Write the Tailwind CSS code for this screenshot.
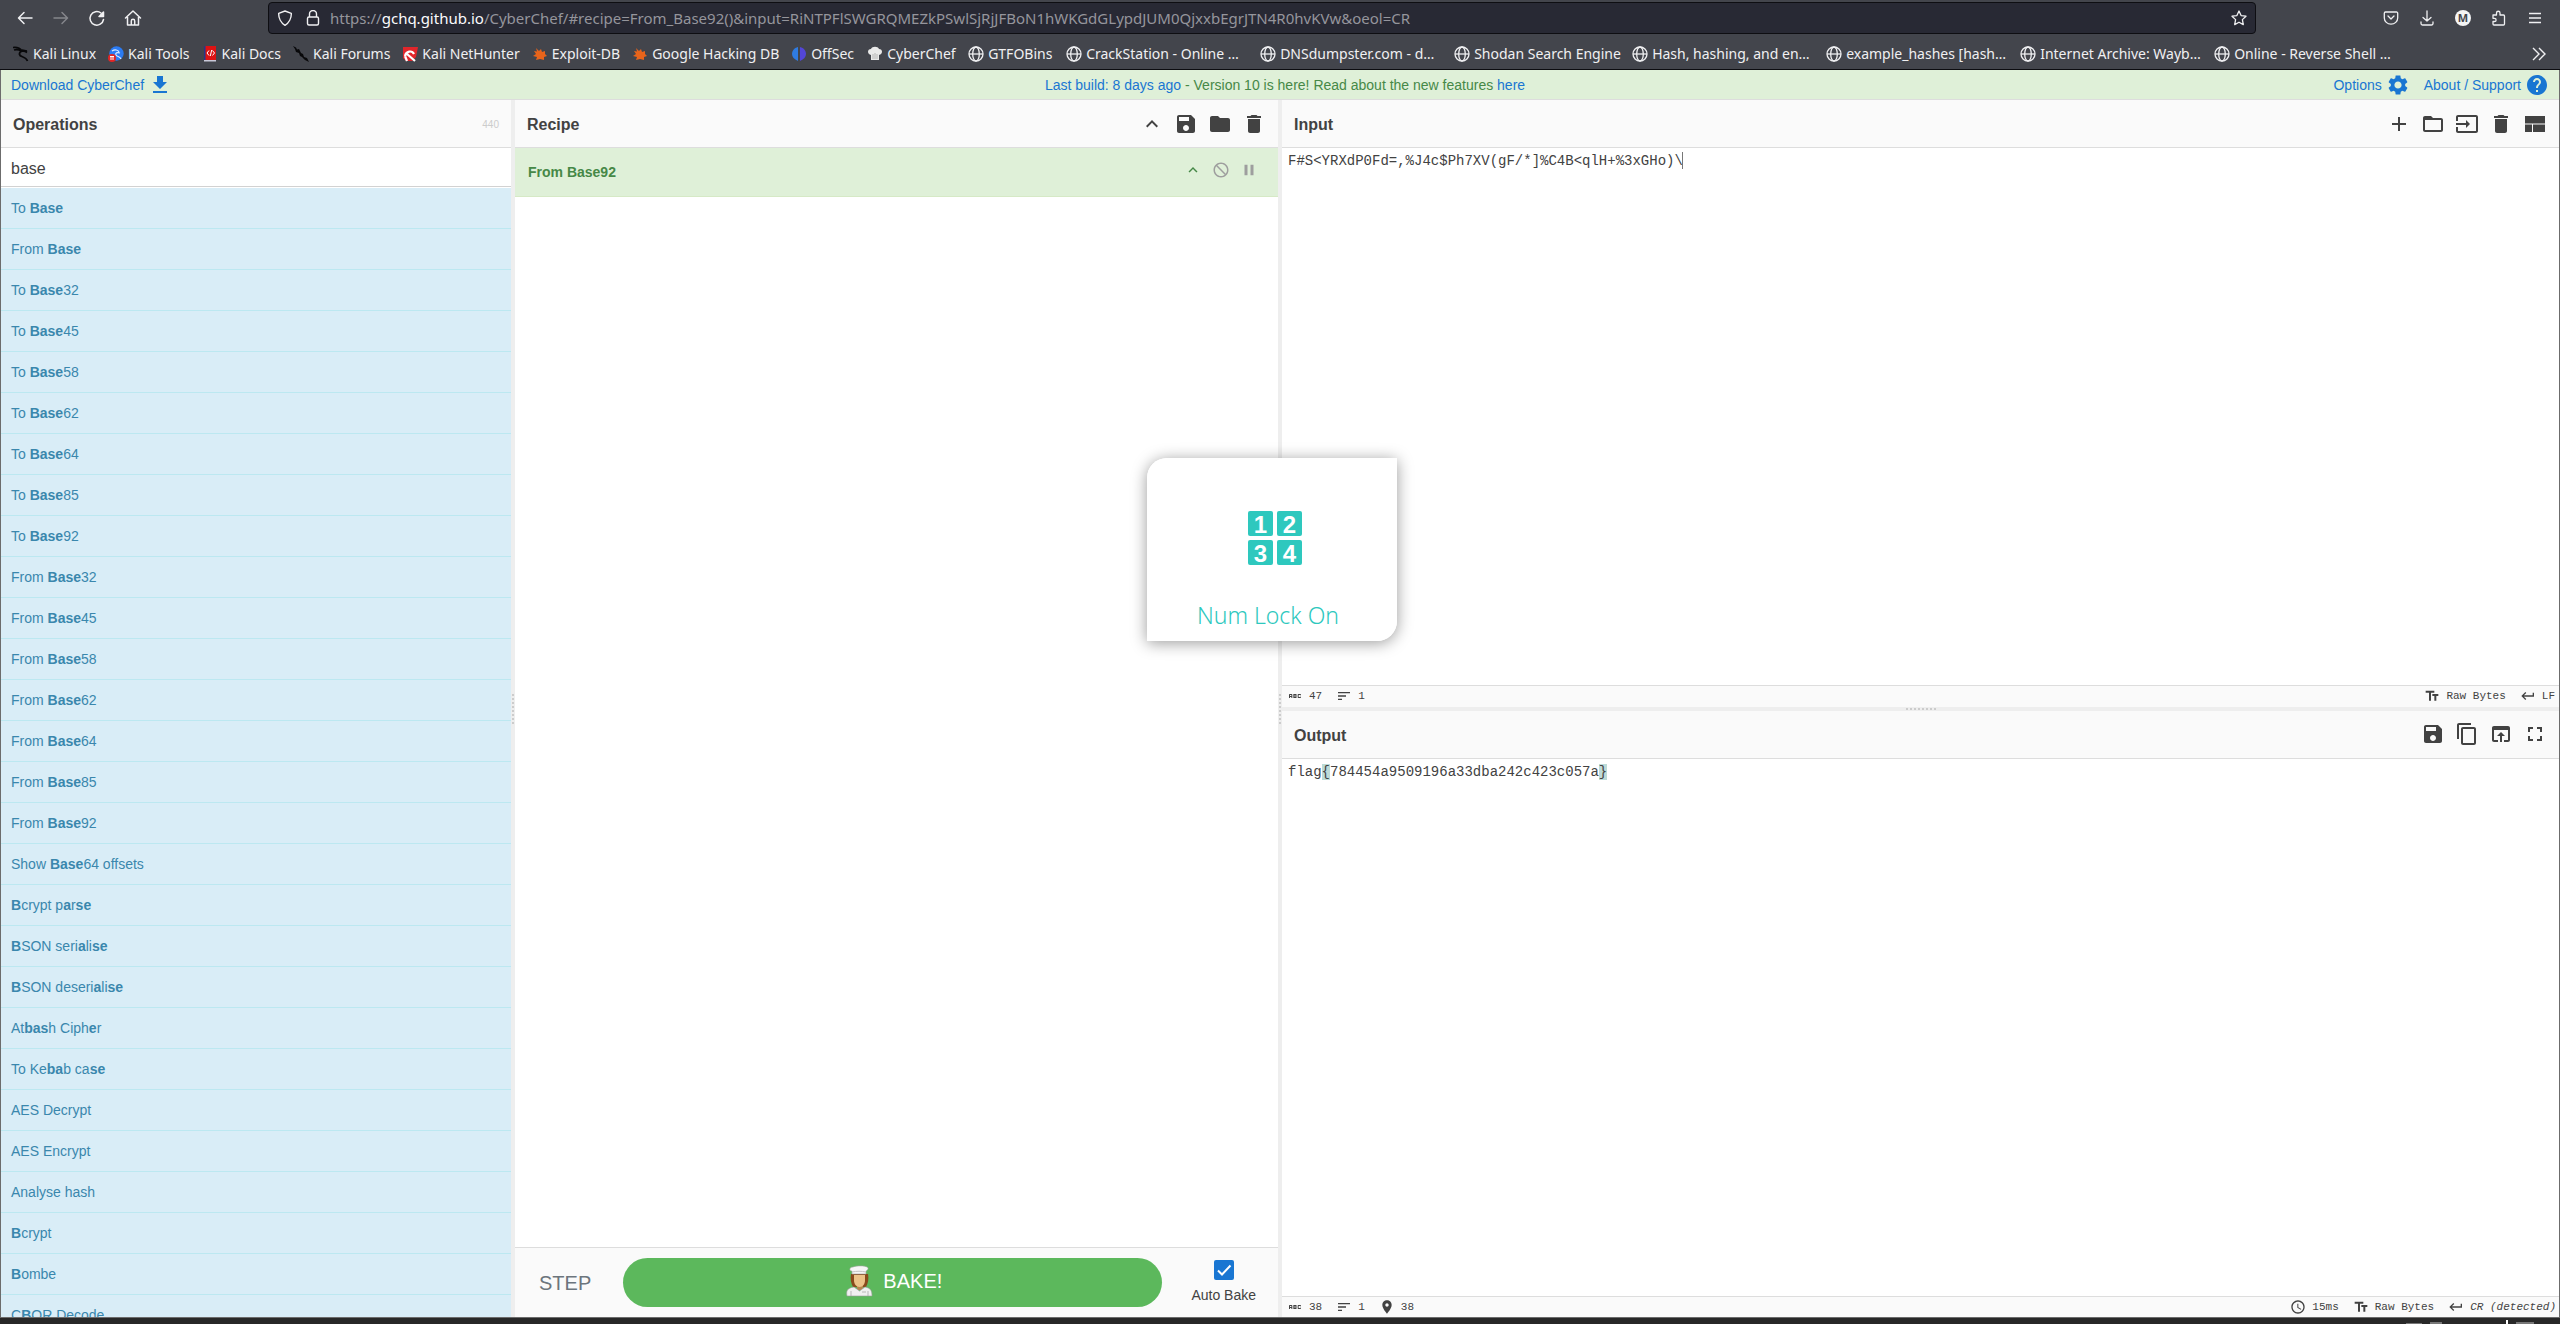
<!DOCTYPE html>
<html lang="en">
<head>
<meta charset="utf-8">
<title>CyberChef</title>
<script src="https://cdn.jsdelivr.net/npm/@tailwindcss/browser@4"></script>
</head>
<body class="h-screen overflow-hidden flex flex-col bg-[#282828] font-['Liberation_Sans',sans-serif] text-sm text-[#424242]">
<svg class="hidden">
  <symbol id="globe" viewBox="0 0 16 16"><g fill="none" stroke="currentColor" stroke-width="1.3"><circle cx="8" cy="8" r="7"/><ellipse cx="8" cy="8" rx="3.3" ry="7"/><path d="M1 8h14"/></g></symbol>
  <symbol id="save" viewBox="0 0 24 24"><path fill="currentColor" d="M17 3H5c-1.11 0-2 .9-2 2v14c0 1.1.89 2 2 2h14c1.1 0 2-.9 2-2V7l-4-4zm-5 16c-1.66 0-3-1.34-3-3s1.34-3 3-3 3 1.34 3 3-1.34 3-3 3zm3-10H5V5h10v4z"/></symbol>
  <symbol id="trash" viewBox="0 0 24 24"><path fill="currentColor" d="M6 19c0 1.1.9 2 2 2h8c1.1 0 2-.9 2-2V7H6v12zM19 4h-3.5l-1-1h-5l-1 1H5v2h14V4z"/></symbol>
  <symbol id="up" viewBox="0 0 24 24"><path fill="currentColor" d="M7.41 15.41 12 10.83l4.59 4.58L18 14l-6-6-6 6z"/></symbol>
  <symbol id="abc" viewBox="0 0 24 24"><path fill="currentColor" d="M21 11h-1.5v-.5h-2v3h2V13H21v1c0 .55-.45 1-1 1h-3c-.55 0-1-.45-1-1v-4c0-.55.45-1 1-1h3c.55 0 1 .45 1 1v1zM8 10v5H6.500v-1.500h-2V15H3v-5c0-.55.45-1 1-1h3c.55 0 1 .45 1 1zm-1.500.5h-2V12h2v-1.500zm7 1.500c.55 0 1 .45 1 1v1c0 .55-.45 1-1 1h-4V9h4c.55 0 1 .45 1 1v1c0 .55-.45 1-1 1zM11 10.500v.75h2v-.75h-2zm2 2.250h-2v.75h2v-.75z"/></symbol>
  <symbol id="sort" viewBox="0 0 24 24"><path fill="currentColor" d="M3 18h6v-2H3v2zM3 6v2h18V6H3zm0 7h12v-2H3v2z"/></symbol>
  <symbol id="tt" viewBox="0 0 24 24"><path fill="currentColor" d="M2.500 4v3h5v12h3V7h5V4h-13zm19 5h-9v3h3v7h3v-7h3V9z"/></symbol>
  <symbol id="ret" viewBox="0 0 24 24"><path fill="currentColor" d="M19 7v4H5.830l3.580-3.590L8 6l-6 6 6 6 1.410-1.410L5.830 13H21V7z"/></symbol>
</svg>

<header class="shrink-0 bg-[#43454c] text-[#f0f0f2] border-b border-[#0c0c10] font-['Noto_Sans',sans-serif]">
  <div class="flex items-center h-9 pl-[15px] pr-[17px]">
    <nav class="flex gap-4 w-[253px] [&_svg]:size-5 [&_button]:block">
      <button aria-label="Back"><svg viewBox="0 0 20 20" fill="none" stroke="currentColor" stroke-width="1.5" stroke-linecap="round" stroke-linejoin="round"><path d="M17 10H4M9 4.500 3.500 10 9 15.500"/></svg></button>
      <button aria-label="Forward" class="text-[#85868b]"><svg viewBox="0 0 20 20" fill="none" stroke="currentColor" stroke-width="1.500" stroke-linecap="round" stroke-linejoin="round"><path d="M3 10h13M11 4.500l5.500 5.500-5.500 5.500"/></svg></button>
      <button aria-label="Reload"><svg viewBox="0 0 20 20" fill="none" stroke="currentColor" stroke-width="1.500" stroke-linecap="round"><path d="M16.500 11.500A6.800 6.800 0 1 1 14 5"/><path d="M16.500 4v4.500H12z" fill="currentColor" stroke-linejoin="round"/></svg></button>
      <button aria-label="Home"><svg viewBox="0 0 20 20" fill="none" stroke="currentColor" stroke-width="1.500" stroke-linecap="round" stroke-linejoin="round"><path d="M2.500 10 10 3l7.500 7M4.500 9v8h11V9M8.300 17v-4a1.700 1.700 0 0 1 3.400 0v4"/></svg></button>
    </nav>
    <div class="flex items-center flex-1 h-8 bg-[#282934] border border-[#0e0e12] rounded pl-2 pr-2">
      <svg class="size-4 mr-3" viewBox="0 0 16 16" fill="none" stroke="currentColor" stroke-width="1.400" stroke-linejoin="round"><path d="M8 1 14.300 3.300C14.500 8 12 13 8 15.300 4 13 1.500 8 1.700 3.300z"/></svg>
      <svg class="size-4" viewBox="0 0 16 16" fill="none" stroke="currentColor" stroke-width="1.400"><rect x="2.500" y="7" width="11" height="8" rx="1.500"/><path d="M4.500 7V4a3.500 3.500 0 0 1 7 0v3"/></svg>
      <div role="textbox" aria-label="Address" contenteditable="true" class="flex-1 ml-[9px] text-[15px] leading-6 whitespace-nowrap text-[#95959c]">https://<span class="text-[#fbfbfe]">gchq.github.io</span>/CyberChef/#recipe=From_Base92()&amp;input=RiNTPFlSWGRQMEZkPSwlSjRjJFBoN1hWKGdGLypdJUM0QjxxbEgrJTN4R0hvKVw&amp;oeol=CR</div>
      <button aria-label="Bookmark this page"><svg class="size-4" viewBox="0 0 16 16" fill="none" stroke="currentColor" stroke-width="1.300" stroke-linejoin="round"><path d="m8 1 2.100 4.600 4.900.6-3.600 3.400.9 5L8 12.200l-4.300 2.400.9-5L1 6.200l4.900-.6z"/></svg></button>
    </div>
    <nav class="flex justify-end gap-5 w-[287px] [&_svg]:size-4 [&_button]:block">
      <button aria-label="Pocket"><svg viewBox="0 0 16 16" fill="none" stroke="currentColor" stroke-width="1.300" stroke-linecap="round" stroke-linejoin="round"><path d="M2.500 2h11a1.200 1.200 0 0 1 1.200 1.200V8A6.700 6.200 0 0 1 1.300 8V3.200A1.200 1.200 0 0 1 2.500 2zM5 6l3 3 3-3"/></svg></button>
      <button aria-label="Downloads"><svg viewBox="0 0 16 16" fill="none" stroke="currentColor" stroke-width="1.300" stroke-linecap="round" stroke-linejoin="round"><path d="M8 1v10M4 7.500 8 11l4-3.500M2 12v1.500A1.500 1.500 0 0 0 3.500 15h9a1.500 1.500 0 0 0 1.500-1.500V12"/></svg></button>
      <button aria-label="Account" class="shrink-0 size-4 rounded-full bg-[#f4f4f4] text-[#43454c] text-[11px] leading-4 font-bold">M</button>
      <button aria-label="Extensions"><svg viewBox="0 0 16 16" fill="none" stroke="currentColor" stroke-width="1.300" stroke-linejoin="round"><path d="M2 5h3.500V3a1.700 1.700 0 0 1 3.500 0v2h3.500a1 1 0 0 1 1 1v8a1 1 0 0 1-1 1H3a1 1 0 0 1-1-1v-2.500h1.500a1.600 1.600 0 0 0 0-3.200H2z"/></svg></button>
      <button aria-label="Menu"><svg viewBox="0 0 16 16" fill="none" stroke="currentColor" stroke-width="1.300"><path d="M2 3.500h12M2 8h12M2 12.500h12"/></svg></button>
    </nav>
  </div>
  <nav class="flex items-center h-[33px] pt-[2px] pl-[13px] pr-[13px] leading-5 whitespace-nowrap">
    <div class="flex gap-3 flex-1 [&>a]:flex [&>a]:items-center [&>a]:gap-1 [&_svg]:size-4 [&_svg]:shrink-0">
      <a href="#"><svg viewBox="0 0 16 16" fill="none" stroke="#08080a" stroke-width="1.700"><path d="M0 1.500c4-.5 7 .5 9 3.500M1 4c3-1 5-.5 7 1M14 6.500C11 4 6 5 6.500 8.500c.5 3 6 1.500 8 6.500M9 4l5 1"/></svg>Kali Linux</a>
      <a href="#"><svg viewBox="0 0 16 16"><circle cx="8.500" cy="7.500" r="7.200" fill="#2b7bf3"/><path d="M4 5c3-2 6-1 7 1M12 7c-3-1-5 0-4 2s4 1 5 4" fill="none" stroke="#dbe9ff" stroke-width="1.200"/><circle cx="4" cy="12" r="4" fill="#e02626"/><path d="M2 10.500h4M3 10.500V14M5 10.500V14" stroke="#fff"/></svg>Kali Tools</a>
      <a href="#"><svg viewBox="0 0 16 16"><path fill="#dd1313" d="M3 0h11v14H3z"/><path fill="#26378a" d="M2 0h1.500v15H2z"/><path d="M2 14h12v1.500H2z" fill="#c9c9d8"/><path d="M7 4.500 5 7l2 2.500M10.500 4.500 12.500 7l-2 2.500M9.700 4l-1.400 6" stroke="#fff" fill="none"/></svg>Kali Docs</a>
      <a href="#"><svg viewBox="0 0 16 16"><path fill="#08080a" d="m0 0 3 1.500 1 2 2-.5 2 4 2 1 1 3 3 1 2 4-4-2-3-3-2-1-1-3-3-1-1-3z"/></svg>Kali Forums</a>
      <a href="#"><svg viewBox="0 0 16 16"><path fill="#e1262b" d="M1 1h15l-2 10-4 4H4L1 12z"/><path d="M3 10c1-5 7-6 9-2M5 8l8 7M3 10l2 5" stroke="#fff" stroke-width="2.200" fill="none"/></svg>Kali NetHunter</a>
      <a href="#"><svg viewBox="0 0 16 16"><path fill="#e8641b" d="m4 2 3 3 2-2 1 3 3-1v3l2 2-3 1v3l-4-1-4 1 1-3-4-1 3-2-2-3 3 .5z"/></svg>Exploit-DB</a>
      <a href="#"><svg viewBox="0 0 16 16"><path fill="#e8641b" d="m4 2 3 3 2-2 1 3 3-1v3l2 2-3 1v3l-4-1-4 1 1-3-4-1 3-2-2-3 3 .5z"/></svg><span class="w-[127px]">Google Hacking DB</span></a>
      <a href="#"><svg viewBox="0 0 16 16"><path fill="#2f7be0" d="M7 1v14C3 13 1 11 1 8s2-6 6-7z"/><path fill="#5346d8" d="M9 1v14c4-2 6-4 6-7s-2-6-6-7z"/></svg><span class="w-[44px]">OffSec</span></a>
      <a href="#"><svg viewBox="0 0 16 16"><path fill="#e9e9e9" d="M4 14V9C0 8 0 3 4 3c1-3 7-3 8 0 4 0 4 5 0 6v5z"/><path d="M6 8v5M8 7v6M10 8v5" stroke="#b5b5b5"/></svg><span class="w-[69px]">CyberChef</span></a>
      <a href="#"><svg><use href="#globe"/></svg><span class="w-[66px]">GTFOBins</span></a>
      <a href="#"><svg><use href="#globe"/></svg><span class="w-[162px]">CrackStation - Online …</span></a>
      <a href="#"><svg><use href="#globe"/></svg><span class="w-[162px]">DNSdumpster.com - d…</span></a>
      <a href="#"><svg><use href="#globe"/></svg><span class="w-[146px]">Shodan Search Engine</span></a>
      <a href="#"><svg><use href="#globe"/></svg><span class="w-[162px]">Hash, hashing, and en…</span></a>
      <a href="#"><svg><use href="#globe"/></svg><span class="w-[162px]">example_hashes [hash…</span></a>
      <a href="#"><svg><use href="#globe"/></svg><span class="w-[162px]">Internet Archive: Wayb…</span></a>
      <a href="#"><svg><use href="#globe"/></svg><span class="w-[162px]">Online - Reverse Shell …</span></a>
    </div>
    <button aria-label="More bookmarks"><svg class="size-4" viewBox="0 0 16 16" fill="none" stroke="currentColor" stroke-width="1.400"><path d="m2 2 6 6-6 6M8 2l6 6-6 6"/></svg></button>
  </nav>
</header>

<main class="flex-1 min-h-0 flex flex-col border-x border-b border-[#6c6c6c] bg-white">
  <div class="shrink-0 grid grid-cols-3 items-center h-[30px] bg-[#dff0d8] border-b border-[#ddd] text-[#468847] pl-[10px] pr-[10px] [&_a]:text-[#1976d2] [&_svg]:size-6 [&_svg]:shrink-0">
    <a href="#" class="flex items-center gap-1">Download CyberChef <svg viewBox="0 0 24 24"><path fill="currentColor" d="M19 9h-4V3H9v6H5l7 7 7-7zM5 18v2h14v-2H5z"/></svg></a>
    <p class="text-center whitespace-nowrap pl-[10px]"><a href="#">Last build: 8 days ago</a> - Version 10 is here! Read about the new features <a href="#">here</a></p>
    <div class="flex justify-end gap-[14px]">
      <a href="#" class="flex items-center gap-1">Options <svg viewBox="0 0 24 24"><path fill="currentColor" d="M19.140 12.940c.04-.3.060-.610.060-.940 0-.32-.02-.64-.07-.94l2.030-1.580c.18-.14.230-.41.120-.61l-1.920-3.320c-.12-.22-.37-.29-.59-.22l-2.390.96c-.5-.38-1.030-.7-1.620-.94l-.36-2.540c-.04-.24-.24-.41-.48-.41h-3.840c-.24 0-.43.170-.47.410l-.36 2.540c-.59.240-1.130.570-1.620.940l-2.390-.96c-.22-.08-.47 0-.59.220L2.740 8.870c-.12.210-.08.470.120.610l2.030 1.580c-.05.300-.09.630-.09.940s.02.640.070.940l-2.030 1.580c-.18.140-.23.410-.12.610l1.920 3.320c.12.220.37.290.59.220l2.390-.96c.5.380 1.030.700 1.620.940l.36 2.540c.05.240.24.410.48.410h3.840c.24 0 .44-.17.470-.41l.36-2.540c.59-.24 1.130-.56 1.620-.94l2.390.96c.22.080.47 0 .59-.22l1.920-3.320c.12-.22.070-.47-.12-.61l-2.010-1.580zM12 15.600c-1.980 0-3.600-1.620-3.600-3.600s1.620-3.600 3.600-3.600 3.600 1.620 3.600 3.600-1.620 3.600-3.600 3.600z"/></svg></a>
      <a href="#" class="flex items-center gap-1">About / Support <svg viewBox="0 0 24 24"><path fill="currentColor" d="M12 2C6.480 2 2 6.480 2 12s4.480 10 10 10 10-4.480 10-10S17.520 2 12 2zm1 17h-2v-2h2v2zm2.070-7.750-.9.920C13.450 12.900 13 13.500 13 15h-2v-.5c0-1.100.450-2.100 1.170-2.830l1.240-1.260c.370-.36.590-.86.590-1.410 0-1.100-.9-2-2-2s-2 .9-2 2H8c0-2.210 1.790-4 4-4s4 1.790 4 4c0 .880-.36 1.680-.93 2.250z"/></svg></a>
    </div>
  </div>

  <div class="flex-1 min-h-0 grid grid-rows-1 grid-cols-[510fr_4px_763fr_4px_1277fr]">
    <section class="min-w-0 min-h-0 flex flex-col overflow-hidden">
      <div class="shrink-0 flex items-center justify-between h-12 bg-[#fafafa] border-b border-[#ddd] px-3">
        <h2 class="text-base font-bold pt-[3px]">Operations</h2><span class="text-[10px] text-[#ccc] pt-1">440</span>
      </div>
      <input type="search" aria-label="Search operations" value="base" class="shrink-0 h-[39px] px-[10px] pt-[3px] text-base border-b border-[#d2d2d2] bg-white outline-none appearance-none mb-px">
      <ul class="text-[#3a87ad] [&>li]:h-[41px] [&>li]:flex [&>li]:items-center [&>li]:px-[10px] [&>li]:bg-[#d9edf7] [&>li]:border-b [&>li]:border-[#bce8f1] [&>li]:whitespace-pre">
        <li>To <b>Base</b></li>
        <li>From <b>Base</b></li>
        <li>To <b>Base</b>32</li>
        <li>To <b>Base</b>45</li>
        <li>To <b>Base</b>58</li>
        <li>To <b>Base</b>62</li>
        <li>To <b>Base</b>64</li>
        <li>To <b>Base</b>85</li>
        <li>To <b>Base</b>92</li>
        <li>From <b>Base</b>32</li>
        <li>From <b>Base</b>45</li>
        <li>From <b>Base</b>58</li>
        <li>From <b>Base</b>62</li>
        <li>From <b>Base</b>64</li>
        <li>From <b>Base</b>85</li>
        <li>From <b>Base</b>92</li>
        <li>Show <b>Base</b>64 offsets</li>
        <li><b>B</b>crypt p<b>a</b>r<b>se</b></li>
        <li><b>B</b>SON seri<b>a</b>li<b>se</b></li>
        <li><b>B</b>SON deseri<b>a</b>li<b>se</b></li>
        <li>At<b>bas</b>h Ciph<b>e</b>r</li>
        <li>To Ke<b>ba</b>b ca<b>se</b></li>
        <li>AES Decrypt</li>
        <li>AES Encrypt</li>
        <li>Analyse hash</li>
        <li><b>B</b>crypt</li>
        <li><b>B</b>ombe</li>
        <li>C<b>B</b>OR Decode</li>
      </ul>
    </section>

    <div class="bg-[#eee] flex items-center justify-center"><div class="h-[30px] w-[2px] bg-[repeating-linear-gradient(to_bottom,#ccc_0_2px,transparent_2px_4px)]"></div></div>

    <section class="min-w-0 min-h-0 flex flex-col">
      <div class="shrink-0 flex items-center justify-between h-12 bg-[#fafafa] border-b border-[#ddd] px-3">
        <h2 class="text-base font-bold pt-[3px]">Recipe</h2>
        <div class="flex gap-[10px] [&_svg]:size-6 [&>button]:block">
          <button aria-label="Hide arguments"><svg><use href="#up"/></svg></button>
          <button aria-label="Save recipe"><svg><use href="#save"/></svg></button>
          <button aria-label="Load recipe"><svg viewBox="0 0 24 24"><path fill="currentColor" d="M10 4H4c-1.100 0-1.990.9-1.990 2L2 18c0 1.100.9 2 2 2h16c1.100 0 2-.9 2-2V8c0-1.100-.9-2-2-2h-8l-2-2z"/></svg></button>
          <button aria-label="Clear recipe"><svg><use href="#trash"/></svg></button>
        </div>
      </div>
      <div class="flex-1">
        <div class="flex items-center justify-between h-[49px] bg-[#dff0d8] border-b border-[#d6e9c6] pl-[13px] pr-5">
          <span class="font-bold text-[#468847]">From Base92</span>
          <div class="flex gap-[10px] pb-1 text-[#9e9e9e] [&_svg]:size-[18px] [&>button]:block">
            <button aria-label="Hide operation arguments" class="text-[#468847]"><svg><use href="#up"/></svg></button>
            <button aria-label="Disable operation"><svg viewBox="0 0 24 24"><path fill="currentColor" d="M12 2C6.480 2 2 6.480 2 12s4.480 10 10 10 10-4.480 10-10S17.520 2 12 2zM4 12c0-4.420 3.580-8 8-8 1.850 0 3.550.630 4.900 1.690L5.690 16.900C4.630 15.550 4 13.850 4 12zm8 8c-1.850 0-3.550-.63-4.900-1.690L18.310 7.100C19.370 8.450 20 10.150 20 12c0 4.420-3.580 8-8 8z" transform="matrix(-1 0 0 1 24 0)"/></svg></button>
            <button aria-label="Set breakpoint"><svg viewBox="0 0 24 24"><path fill="currentColor" d="M6 19h4V5H6v14zm8-14v14h4V5h-4z"/></svg></button>
          </div>
        </div>
      </div>
      <div class="shrink-0 flex items-center h-[70px] bg-[#fafafa] border-t border-[#ddd] pl-6 pr-[22px]">
        <button class="text-xl text-[#6c757d] mr-8">STEP</button>
        <button class="flex-1 flex items-center justify-center gap-2 h-[49px] pb-[3px] rounded-full bg-[#5cb85c] text-white text-xl">
          <svg class="size-8" viewBox="0 0 32 32"><path fill="#8a4a1c" d="M8 9h17c1 5 0 9-2 13H10C8 18 7 14 8 9z"/><path fill="#b8864f" d="M14 18h6v7h-6z"/><path fill="#ecc288" d="M11 10h11v5c0 4-2 7-5.500 7S11 19 11 15z"/><path fill="#f0f0f0" stroke="#9a9a9a" stroke-width=".6" d="M4 31c-1-5 0-8 7-9l5.500 4 5.500-4c6 1 7 4 7 9z"/><path d="M8 26v5M25 26v5M19 27h4" stroke="#aaa" stroke-width=".8"/><path fill="#f6f6f6" stroke="#a5a5a5" stroke-width=".6" d="M9 9V6C6 6 6 2 10 2c3-1.500 12-1.500 14 0 2 1 1 3-1 4v3z"/><path d="M9 7c5-1 9-1 14 0" stroke="#c5c5c5" fill="none"/></svg>
          BAKE!
        </button>
        <label class="ml-[29px] flex flex-col items-center gap-[5px] leading-5">
          <span class="grid size-5">
            <input type="checkbox" checked class="appearance-none col-start-1 row-start-1 size-5 rounded-xs bg-[#1976d2]">
            <svg class="col-start-1 row-start-1 size-5 pointer-events-none" viewBox="0 0 20 20" fill="none" stroke="#fff" stroke-width="2"><path d="m4 10.500 4 4 8.500-9"/></svg>
          </span>
          Auto Bake
        </label>
      </div>
    </section>

    <div class="bg-[#eee] flex items-center justify-center"><div class="h-[30px] w-[2px] bg-[repeating-linear-gradient(to_bottom,#ccc_0_2px,transparent_2px_4px)]"></div></div>

    <section class="min-w-0 min-h-0 grid grid-rows-[1fr_4px_1fr]">
      <div class="min-h-0 flex flex-col">
        <div class="shrink-0 flex items-center justify-between h-12 bg-[#fafafa] border-b border-[#ddd] px-3">
          <h2 class="text-base font-bold pt-[3px]">Input</h2>
          <div class="flex gap-[10px] [&_svg]:size-6 [&>button]:block">
            <button aria-label="Add a new input tab"><svg viewBox="0 0 24 24"><path fill="currentColor" d="M19 13h-6v6h-2v-6H5v-2h6V5h2v6h6v2z"/></svg></button>
            <button aria-label="Open folder as input"><svg viewBox="0 0 24 24"><path fill="currentColor" d="M20 6h-8l-2-2H4c-1.100 0-1.990.9-1.990 2L2 18c0 1.100.9 2 2 2h16c1.100 0 2-.9 2-2V8c0-1.100-.9-2-2-2zm0 12H4V8h16v10z"/></svg></button>
            <button aria-label="Open file as input"><svg viewBox="0 0 24 24"><path fill="currentColor" d="M21 3.010H3c-1.100 0-2 .9-2 2V9h2V4.990h18v14.030H3V15H1v4.010c0 1.100.9 1.980 2 1.980h18c1.100 0 2-.88 2-1.980v-14c0-1.110-.9-2-2-2zM11 16l4-4-4-4v3H1v2h10v3z"/></svg></button>
            <button aria-label="Clear input and output"><svg><use href="#trash"/></svg></button>
            <button aria-label="Reset pane layout"><svg viewBox="0 0 24 24"><path fill="currentColor" d="M2 4h20v7.500H2zM2 12.500h7V20H2zM10 12.500h12V20H10z"/></svg></button>
          </div>
        </div>
        <div class="relative flex-1 min-h-0 flex font-['Liberation_Mono',monospace]">
          <textarea aria-label="Input" spellcheck="false" class="flex-1 resize-none outline-none bg-white px-[6px] pt-1 leading-[18px]">F#S&lt;YRXdP0Fd=,%J4c$Ph7XV(gF/*]%C4B&lt;qlH+%3xGHo)\</textarea>
          <span class="absolute top-1 left-[calc(5px+47ch)] w-px h-[17px] bg-[#777]"></span>
        </div>
        <div class="shrink-0 flex items-center h-[22px] bg-[#fafafa] border-t border-[#ddd] pl-[5px] pr-1 font-['Liberation_Mono',monospace] text-[11px] leading-4 [&_svg]:size-4 [&>span]:flex [&>span]:gap-[6px]">
          <span><svg><use href="#abc"/></svg>47</span>
          <span class="ml-[14px] mr-auto"><svg><use href="#sort"/></svg>1</span>
          <span><svg><use href="#tt"/></svg>Raw Bytes</span>
          <span class="ml-[14px]"><svg><use href="#ret"/></svg>LF</span>
        </div>
      </div>
      <div class="bg-[#eee] flex items-center justify-center"><div class="w-[30px] h-[2px] bg-[repeating-linear-gradient(to_right,#ccc_0_2px,transparent_2px_4px)]"></div></div>
      <div class="min-h-0 flex flex-col">
        <div class="shrink-0 flex items-center justify-between h-12 bg-[#fafafa] border-b border-[#ddd] px-3">
          <h2 class="text-base font-bold pt-[3px]">Output</h2>
          <div class="flex gap-[10px] [&_svg]:size-6 [&>button]:block">
            <button aria-label="Save output to file"><svg><use href="#save"/></svg></button>
            <button aria-label="Copy output"><svg viewBox="0 0 24 24"><path fill="currentColor" d="M16 1H4c-1.100 0-2 .9-2 2v14h2V3h12V1zm3 4H8c-1.100 0-2 .9-2 2v14c0 1.100.9 2 2 2h11c1.100 0 2-.9 2-2V7c0-1.100-.9-2-2-2zm0 16H8V7h11v14z"/></svg></button>
            <button aria-label="Replace input with output"><svg viewBox="0 0 24 24"><path fill="currentColor" d="M19 4H5c-1.110 0-2 .9-2 2v12c0 1.100.890 2 2 2h4v-2H5V8h14v10h-4v2h4c1.100 0 2-.9 2-2V6c0-1.100-.89-2-2-2zm-7 6-4 4h3v6h2v-6h3l-4-4z"/></svg></button>
            <button aria-label="Maximise output"><svg viewBox="0 0 24 24"><path fill="currentColor" d="M7 14H5v5h5v-2H7v-3zm-2-4h2V7h3V5H5v5zm12 7h-3v2h5v-5h-2v3zM14 5v2h3v3h2V5h-5z"/></svg></button>
          </div>
        </div>
        <div class="flex-1 px-[6px] pt-1 font-['Liberation_Mono',monospace] leading-[18px]">flag<span class="bg-[#bddbd8]">{</span>784454a9509196a33dba242c423c057a<span class="bg-[#bddbd8]">}</span></div>
        <div class="shrink-0 flex items-center h-[21px] bg-[#fafafa] border-t border-[#ddd] pl-[5px] pr-[3px] font-['Liberation_Mono',monospace] text-[11px] leading-4 [&_svg]:size-4 [&>span]:flex [&>span]:gap-[6px]">
          <span><svg><use href="#abc"/></svg>38</span>
          <span class="ml-[14px]"><svg><use href="#sort"/></svg>1</span>
          <span class="ml-[14px] mr-auto"><svg viewBox="0 0 24 24"><path fill="currentColor" d="M12 2C8.130 2 5 5.130 5 9c0 5.250 7 13 7 13s7-7.750 7-13c0-3.870-3.130-7-7-7zm0 9.500c-1.380 0-2.500-1.120-2.500-2.500s1.120-2.500 2.500-2.500 2.500 1.120 2.500 2.500-1.120 2.500-2.500 2.500z"/></svg>38</span>
          <span><svg viewBox="0 0 24 24"><path fill="currentColor" d="M11.990 2C6.470 2 2 6.480 2 12s4.470 10 9.990 10C17.520 22 22 17.520 22 12S17.520 2 11.990 2zM12 20c-4.420 0-8-3.580-8-8s3.580-8 8-8 8 3.580 8 8-3.580 8-8 8zm.5-13H11v6l5.250 3.150.750-1.230-4.500-2.670z"/></svg>15ms</span>
          <span class="ml-[14px]"><svg><use href="#tt"/></svg>Raw Bytes</span>
          <span class="ml-[14px]"><svg><use href="#ret"/></svg><i>CR (detected)</i></span>
        </div>
      </div>
    </section>
  </div>
</main>

<footer class="shrink-0 h-[6px] flex items-end justify-end gap-2 pr-[26px]">
  <span class="w-4 h-px bg-[#777]"></span>
  <span class="w-3 h-[2px] bg-[#777]"></span>
  <span class="ml-14 w-[2px] h-1 bg-white"></span>
  <span class="w-[18px] h-[2px] bg-[#777]"></span>
</footer>

<div role="status" class="absolute left-[1147px] top-[458px] w-[250px] h-[183px] rounded-tl-[20px] rounded-br-[20px] bg-white/95 shadow-[0_2px_16px_rgba(0,0,0,0.4)] flex flex-col items-center pt-[53px]">
  <div class="grid grid-cols-2 gap-1 ml-[6px] font-bold text-2xl text-white text-center [&>span]:size-[25px] [&>span]:rounded-xs [&>span]:bg-[#2ec8be] [&>span]:leading-[27px]">
    <span>1</span><span>2</span><span>3</span><span>4</span>
  </div>
  <p class="mt-[34px] mr-2 font-['Noto_Sans',sans-serif] font-light text-[23px] leading-8 text-[#2ec8be]">Num Lock On</p>
</div>
</body>
</html>
